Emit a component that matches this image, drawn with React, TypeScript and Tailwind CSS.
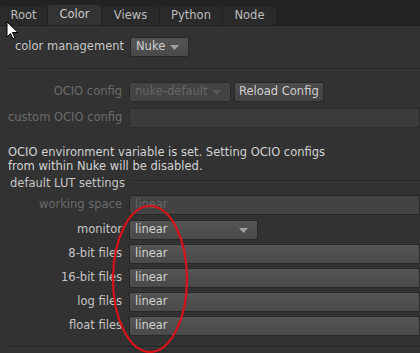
import React from 'react';

const font = { fontFamily: '"DejaVu Sans", Verdana, sans-serif' };

const tabs = [
  { name: 'Root', w: 'w-[47px]' },
  { name: 'Color', w: 'w-[53px]' },
  { name: 'Views', w: 'w-[57px]' },
  { name: 'Python', w: 'w-[62px]' },
  { name: 'Node', w: 'w-[53px]' },
];

const Arrow = ({ dim }: { dim?: boolean }) => (
  <svg width="9" height="5" viewBox="0 0 9 5" className="shrink-0">
    <path d="M0 0h9L4.5 5z" fill={dim ? '#595959' : '#a0a0a0'} />
  </svg>
);

const Field: React.FC<{ value?: string; disabled?: boolean; className?: string; arrow?: boolean }> = ({ value, disabled, className = '', arrow }) => (
  <div
    className={`h-[20px] flex items-center justify-between whitespace-nowrap pl-[5px] pr-[9px] rounded-[2px] border border-[#282828] ${
      disabled ? 'bg-[#434343] text-[#676767]' : 'bg-gradient-to-b from-[#545454] to-[#4a4a4a] text-[#d0d0d0]'
    } ${className}`}
  >
    <span>{value}</span>
    {arrow && <Arrow dim={disabled} />}
  </div>
);

const Row: React.FC<{ label: string; dim?: boolean; className?: string; children: React.ReactNode }> = ({ label, dim, className = '', children }) => (
  <div className={`flex items-center h-[20px] gap-[7px] ${className}`}>
    <div className={`w-[114px] shrink-0 text-right whitespace-nowrap ${dim ? 'text-[#6b6b6b]' : 'text-[#c6c6c6]'}`}>{label}</div>
    <div className="flex-1 flex gap-[3px]">{children}</div>
  </div>
);

const Rule = ({ className = '' }: { className?: string }) => (
  <div className={`h-[2px] border-t border-[#242424] border-b border-b-[#393939] ${className}`} />
);

export default function App() {
  return (
    <div className="w-[420px] h-[353px] bg-[#323232] relative overflow-hidden text-[11.5px] leading-none" style={font}>
      {/* tab bar */}
      <div className="h-[26px] bg-[#232323] flex items-end gap-[1px] border-b border-[#1f1f1f]">
        {tabs.map((t) => (
          <div
            key={t.name}
            className={`flex items-center justify-center rounded-t-[2px] ${t.w} ${
              t.name === 'Color' ? 'h-[20px] bg-[#333333] text-[#cdcdcd]' : 'h-[18px] bg-[#2a2a2a] text-[#bcbcbc]'
            }`}
          >
            {t.name}
          </div>
        ))}
      </div>

      <div className="pl-[8px] pt-[11px]">
        <div className="flex items-center h-[20px] gap-[6px] pl-[7px]">
          <span className="text-[#c6c6c6]">color management</span>
          <Field value="Nuke" arrow className="w-[59px]" />
        </div>

        <Rule className="mt-[11px]" />

        <div className="mt-[12px] flex flex-col gap-[6px]">
          <Row label="OCIO config" dim>
            <Field value="nuke-default" disabled arrow className="w-[102px]" />
            <div className="h-[20px] px-[4px] flex items-center whitespace-nowrap rounded-[2px] border border-[#282828] bg-gradient-to-b from-[#4c4c4c] to-[#434343] text-[#cfcfcf]">
              Reload Config
            </div>
          </Row>
          <Row label="custom OCIO config" dim>
            <div className="flex-1 h-[20px] bg-[#3b3b3b] border border-[#2c2c2c] rounded-[2px]" />
          </Row>
        </div>

        <div className="mt-[17px] text-[#d2d2d2] leading-[14px]">
          OCIO environment variable is set. Setting OCIO configs
          <br />
          from within Nuke will be disabled.
        </div>

        <div className="mt-[4px] h-[14px] flex items-center pl-[2px]">
          <span className="text-[#c6c6c6]">default LUT settings</span>
          <Rule className="flex-1 ml-[7px] -mt-[6px]" />
        </div>

        <div className="mt-[4px] flex flex-col gap-[4px]">
          <Row label="working space" dim className="mb-[1px]">
            <Field value="linear" disabled className="flex-1" />
          </Row>
          <Row label="monitor">
            <Field value="linear" arrow className="w-[129px]" />
          </Row>
          <Row label="8-bit files">
            <Field value="linear" className="flex-1" />
          </Row>
          <Row label="16-bit files">
            <Field value="linear" className="flex-1" />
          </Row>
          <Row label="log files">
            <Field value="linear" className="flex-1" />
          </Row>
          <Row label="float files">
            <Field value="linear" className="flex-1" />
          </Row>
        </div>

        <Rule className="mt-[10px]" />
      </div>

      {/* red annotation ellipse */}
      <svg className="absolute left-0 top-0 pointer-events-none" width="420" height="353">
        <ellipse cx="150" cy="279" rx="37" ry="73" fill="none" stroke="#d8121a" strokeWidth="2.2" />
      </svg>

      {/* mouse cursor */}
      <svg className="absolute left-[6px] top-[21px]" width="14" height="20" viewBox="0 0 14 20">
        <path d="M1 1v15l3.5-3.5 2.5 5.5 2-1-2.5-5.5H12z" fill="#fff" stroke="#000" strokeWidth="1" />
      </svg>
    </div>
  );
}
